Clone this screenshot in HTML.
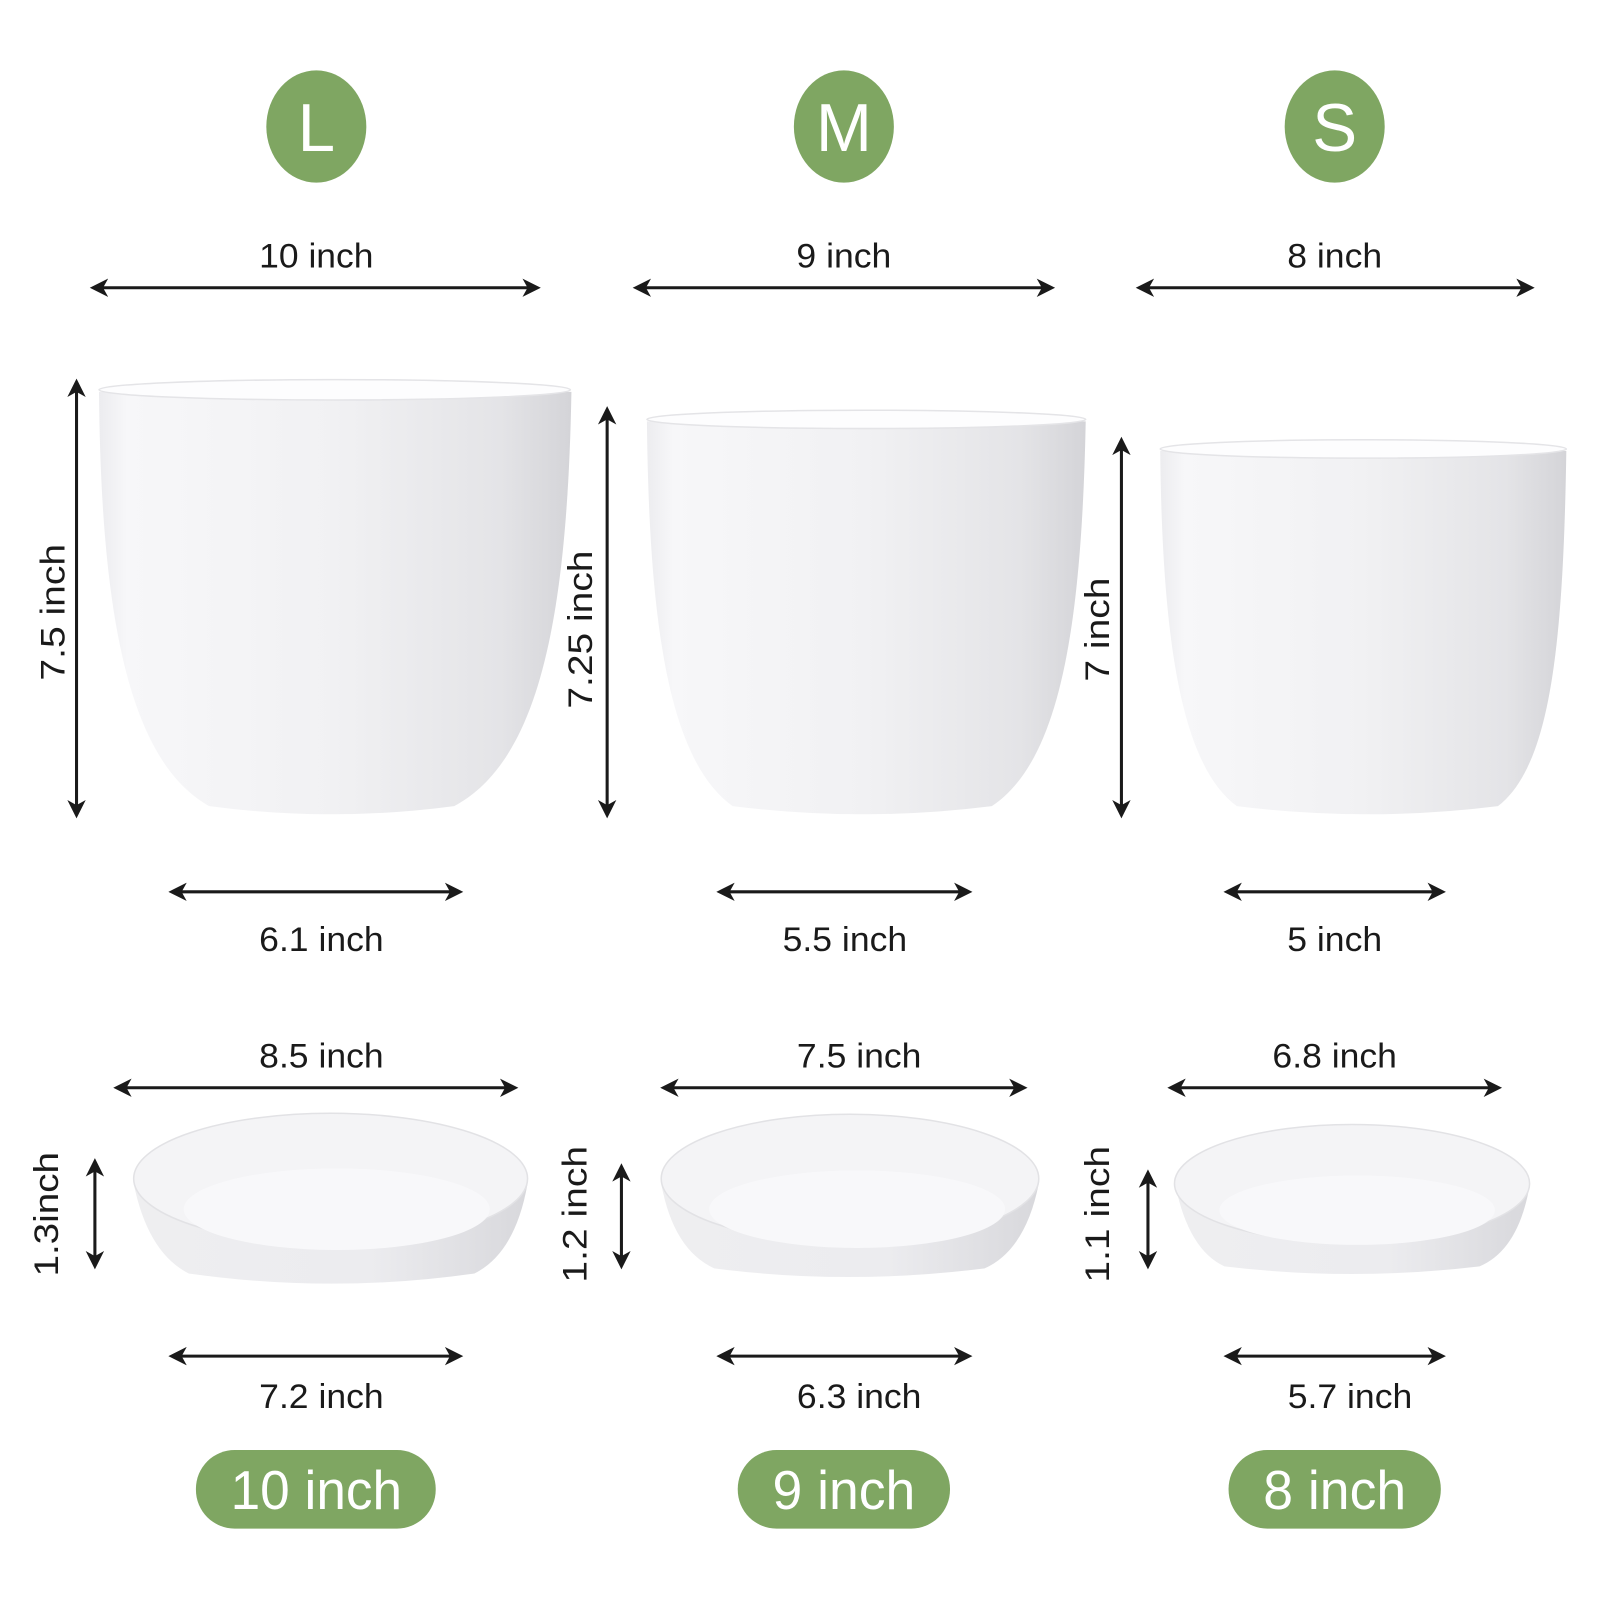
<!DOCTYPE html>
<html><head><style>
html,body{margin:0;padding:0;background:#fff;}
svg{display:block;}
text{font-family:"Liberation Sans",Arial,sans-serif;}
</style></head><body>
<svg width="1600" height="1600" viewBox="0 0 1568 1568" xmlns="http://www.w3.org/2000/svg">
<defs>
<linearGradient id="pg" x1="0" x2="1" y1="0" y2="0">
<stop offset="0" stop-color="#ececef"/><stop offset="0.06" stop-color="#f7f7f9"/>
<stop offset="0.5" stop-color="#f1f1f3"/><stop offset="0.85" stop-color="#e4e4e7"/><stop offset="1" stop-color="#d4d4d8"/>
</linearGradient>
<linearGradient id="sg" x1="0" x2="1"><stop offset="0" stop-color="#eeeef0"/><stop offset="0.6" stop-color="#ececef"/><stop offset="1" stop-color="#d8d8dc"/></linearGradient>
<marker id="ah" viewBox="0 0 20 20" refX="14" refY="10" markerWidth="20" markerHeight="20" markerUnits="userSpaceOnUse" orient="auto-start-reverse">
<path d="M0,1 L18,10 L0,19 L5,10 Z" fill="#1a1a1a"/></marker>
</defs>
<g fill="#7fa662">
<ellipse cx="310" cy="124" rx="49" ry="55"/>
<ellipse cx="827" cy="124" rx="49" ry="55"/>
<ellipse cx="1308" cy="124" rx="49" ry="55"/>
<rect x="192" y="1421" width="235" height="77" rx="38"/>
<rect x="723" y="1421" width="208" height="77" rx="38"/>
<rect x="1204" y="1421" width="208" height="77" rx="38"/>
</g>
<g fill="#fff" font-size="66" text-anchor="middle">
<text x="310" y="148">L</text><text x="827" y="148">M</text><text x="1308" y="148">S</text>
</g>
<g fill="#fff" font-size="54" text-anchor="middle">
<text x="310" y="1479" textLength="168" lengthAdjust="spacingAndGlyphs">10 inch</text>
<text x="827" y="1479" textLength="140" lengthAdjust="spacingAndGlyphs">9 inch</text>
<text x="1308" y="1479" textLength="140" lengthAdjust="spacingAndGlyphs">8 inch</text>
</g>
<g stroke="#1a1a1a" stroke-width="3" marker-start="url(#ah)" marker-end="url(#ah)" fill="none">
<line x1="92" y1="282" x2="526" y2="282"/><line x1="624" y1="282" x2="1030" y2="282"/><line x1="1117" y1="282" x2="1500" y2="282"/>
<line x1="169" y1="874" x2="450" y2="874"/><line x1="706" y1="874" x2="949" y2="874"/><line x1="1203" y1="874" x2="1413" y2="874"/>
<line x1="115" y1="1066" x2="504" y2="1066"/><line x1="651" y1="1066" x2="1003" y2="1066"/><line x1="1148" y1="1066" x2="1468" y2="1066"/>
<line x1="169" y1="1329" x2="450" y2="1329"/><line x1="706" y1="1329" x2="949" y2="1329"/><line x1="1203" y1="1329" x2="1413" y2="1329"/>
<line x1="75" y1="375" x2="75" y2="798"/><line x1="595" y1="402" x2="595" y2="798"/><line x1="1099" y1="432" x2="1099" y2="798"/>
<line x1="93" y1="1139" x2="93" y2="1240"/><line x1="609" y1="1144" x2="609" y2="1240"/><line x1="1125" y1="1150" x2="1125" y2="1240"/>
</g>
<g fill="#1a1a1a" font-size="34" text-anchor="middle">
<text x="310" y="262" textLength="112" lengthAdjust="spacingAndGlyphs">10 inch</text>
<text x="827" y="262" textLength="93" lengthAdjust="spacingAndGlyphs">9 inch</text>
<text x="1308" y="262" textLength="93" lengthAdjust="spacingAndGlyphs">8 inch</text>
<text x="315" y="932" textLength="122" lengthAdjust="spacingAndGlyphs">6.1 inch</text>
<text x="828" y="932" textLength="122" lengthAdjust="spacingAndGlyphs">5.5 inch</text>
<text x="1308" y="932" textLength="93" lengthAdjust="spacingAndGlyphs">5 inch</text>
<text x="315" y="1046" textLength="122" lengthAdjust="spacingAndGlyphs">8.5 inch</text>
<text x="842" y="1046" textLength="122" lengthAdjust="spacingAndGlyphs">7.5 inch</text>
<text x="1308" y="1046" textLength="122" lengthAdjust="spacingAndGlyphs">6.8 inch</text>
<text x="315" y="1380" textLength="122" lengthAdjust="spacingAndGlyphs">7.2 inch</text>
<text x="842" y="1380" textLength="122" lengthAdjust="spacingAndGlyphs">6.3 inch</text>
<text x="1323" y="1380" textLength="122" lengthAdjust="spacingAndGlyphs">5.7 inch</text>
<text transform="translate(63,600) rotate(-90)" textLength="134" lengthAdjust="spacingAndGlyphs">7.5 inch</text>
<text transform="translate(580,617) rotate(-90)" textLength="155" lengthAdjust="spacingAndGlyphs">7.25 inch</text>
<text transform="translate(1087,617) rotate(-90)" textLength="102" lengthAdjust="spacingAndGlyphs">7 inch</text>
<text transform="translate(57,1190) rotate(-90)" textLength="122" lengthAdjust="spacingAndGlyphs">1.3inch</text>
<text transform="translate(575,1190) rotate(-90)" textLength="134" lengthAdjust="spacingAndGlyphs">1.2 inch</text>
<text transform="translate(1087,1190) rotate(-90)" textLength="134" lengthAdjust="spacingAndGlyphs">1.1 inch</text>
</g>
<!-- pots -->
<g>
<path d="M97,384 C99,600 125,745 205,790 Q325,806 445,790 C530,745 556,600 560,384 Z" fill="url(#pg)"/>
<ellipse cx="328" cy="382" rx="231" ry="10" fill="#fdfdfe" stroke="#e4e4e7" stroke-width="1.5"/>
<path d="M634,413 C636,610 655,745 718,790 Q845,806 972,790 C1040,745 1060,610 1064,413 Z" fill="url(#pg)"/>
<ellipse cx="849" cy="411" rx="215" ry="9" fill="#fdfdfe" stroke="#e4e4e7" stroke-width="1.5"/>
<path d="M1137,442 C1139,630 1158,750 1212,790 Q1340,806 1468,790 C1520,750 1532,630 1535,442 Z" fill="url(#pg)"/>
<ellipse cx="1336" cy="440" rx="199" ry="9" fill="#fdfdfe" stroke="#e4e4e7" stroke-width="1.5"/>
</g>
<!-- saucers -->
<g>
<path d="M131,1160 Q145,1228 185,1248 Q325,1268 465,1248 Q505,1228 517,1160 Z" fill="url(#sg)"/>
<ellipse cx="324" cy="1155" rx="193" ry="64" fill="#f4f4f6" stroke="#e2e2e5" stroke-width="1.5"/>
<ellipse cx="330" cy="1185" rx="150" ry="40" fill="#f8f8fa"/>
<path d="M648,1160 Q660,1225 700,1243 Q830,1260 965,1243 Q1005,1225 1018,1160 Z" fill="url(#sg)"/>
<ellipse cx="833" cy="1155" rx="185" ry="63" fill="#f4f4f6" stroke="#e2e2e5" stroke-width="1.5"/>
<ellipse cx="840" cy="1185" rx="145" ry="38" fill="#f8f8fa"/>
<path d="M1152,1162 Q1165,1225 1200,1241 Q1325,1256 1450,1241 Q1488,1225 1499,1162 Z" fill="url(#sg)"/>
<ellipse cx="1325" cy="1160" rx="174" ry="58" fill="#f4f4f6" stroke="#e2e2e5" stroke-width="1.5"/>
<ellipse cx="1330" cy="1186" rx="135" ry="34" fill="#f8f8fa"/>
</g>
</svg>
</body></html>
